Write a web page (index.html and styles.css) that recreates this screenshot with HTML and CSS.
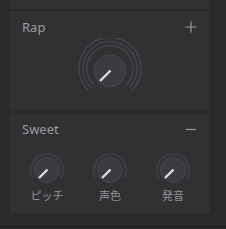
FILE: index.html
```html
<!DOCTYPE html>
<html>
<head>
<meta charset="utf-8">
<link rel="stylesheet" href="styles.css">
</head>
<body>
<div class="stack">
  <div class="stub"></div>
  <section class="panel">
    <div class="head">
      <span class="title">Rap</span>
      <svg class="icon" width="12" height="12" viewBox="0 0 12 12"><path d="M6 0.5V11.5M0.5 6H11.5" stroke="#9a989d" stroke-width="1.2" fill="none"/></svg>
    </div>
    <div class="big">
      <svg width="70" height="62" viewBox="0 0 70 62">
        <g fill="none" stroke="#444247" stroke-width="1.6">
          <path d="M13.08 52.36 A31 31 0 1 1 56.92 52.36"/>
          <path d="M15.91 49.53 A27 27 0 1 1 54.09 49.53"/>
          <path d="M18.74 46.70 A23 23 0 1 1 51.26 46.70"/>
        </g>
        <circle cx="35" cy="33" r="16" fill="#3d3b3f" stroke="#48464b" stroke-width="1"/>
        <path d="M35.5 32.5 L25 43" stroke="#dcd8e2" stroke-width="2.4"/>
      </svg>
    </div>
  </section>
  <section class="panel">
    <div class="head">
      <span class="title">Sweet</span>
      <svg class="icon" width="12" height="12" viewBox="0 0 12 12"><path d="M1 6.5H11" stroke="#9a989d" stroke-width="1.2" fill="none"/></svg>
    </div>
    <div class="knobs">
      <div class="knob">
        <svg width="38" height="34" viewBox="0 0 38 34"><path d="M5.14 25 A16 16 0 1 1 32.86 25" fill="none" stroke="#3b3a3e" stroke-width="3"/><circle cx="19" cy="17" r="12.5" fill="#3d3b3f" stroke="#48464b" stroke-width="1"/><path d="M19.5 16.5 L11 25" stroke="#dcd8e2" stroke-width="2.4"/></svg>
        <span class="label">ピッチ</span>
      </div>
      <div class="knob">
        <svg width="38" height="34" viewBox="0 0 38 34"><path d="M5.14 25 A16 16 0 1 1 32.86 25" fill="none" stroke="#3b3a3e" stroke-width="3"/><circle cx="19" cy="17" r="12.5" fill="#3d3b3f" stroke="#48464b" stroke-width="1"/><path d="M19.5 16.5 L11 25" stroke="#dcd8e2" stroke-width="2.4"/></svg>
        <span class="label">声色</span>
      </div>
      <div class="knob">
        <svg width="38" height="34" viewBox="0 0 38 34"><path d="M5.14 25 A16 16 0 1 1 32.86 25" fill="none" stroke="#3b3a3e" stroke-width="3"/><circle cx="19" cy="17" r="12.5" fill="#3d3b3f" stroke="#48464b" stroke-width="1"/><path d="M19.5 16.5 L11 25" stroke="#dcd8e2" stroke-width="2.4"/></svg>
        <span class="label">発音</span>
      </div>
    </div>
  </section>
</div>
<div class="footer"></div>
</body>
</html>
```
FILE: styles.css
```css
html, body {
  margin: 0;
  padding: 0;
  background: #2a292c;
  height: 229px;
  overflow: hidden;
  font-family: "Noto Sans", "Noto Sans CJK JP", sans-serif;
}
.stack {
  width: 200px;
  margin-left: 10px;
  display: flex;
  flex-direction: column;
  gap: 2px;
}
.stub {
  height: 9px;
  background: #313033;
}
.panel {
  height: 100px;
  background: #313033;
  box-sizing: border-box;
  padding: 7px 12px 0 12px;
}
.head {
  display: flex;
  justify-content: space-between;
  align-items: center;
  height: 18px;
}
.title {
  color: #9c9a9f;
  font-size: 13px;
  line-height: 18px;
}
.icon {
  display: block;
  margin-right: 1px;
}
.big {
  display: flex;
  justify-content: center;
  margin-top: 2px;
}
.big svg {
  display: block;
}
.knobs {
  display: flex;
  justify-content: center;
  gap: 25px;
  margin-top: 15px;
}
.knob {
  width: 38px;
  display: flex;
  flex-direction: column;
  align-items: center;
}
.knob svg {
  display: block;
}
.label {
  color: #929095;
  font-size: 11px;
  line-height: 14px;
  margin-top: 2px;
}
.footer {
  margin-top: 13px;
  height: 1px;
  background: #19191b;
}
```
